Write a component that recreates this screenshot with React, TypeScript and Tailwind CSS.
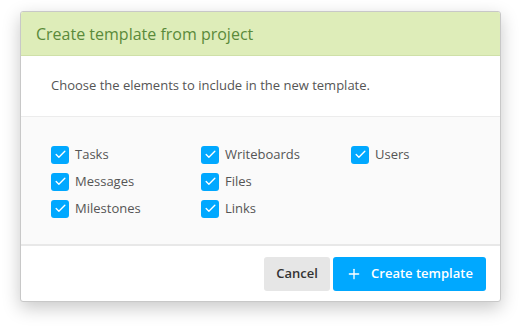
import { Check, Plus } from 'lucide-react';

const columns = [
  ['Tasks', 'Messages', 'Milestones'],
  ['Writeboards', 'Files', 'Links'],
  ['Users'],
];

function CheckItem({ label }: { label: string }) {
  return (
    <label className="flex items-center gap-[6px] h-[27px] text-[13px] text-[#555]">
      <span className="w-[18px] h-[18px] rounded-[3px] bg-[#00a8ff] flex items-center justify-center">
        <Check className="w-[13px] h-[13px] text-white" strokeWidth={2.5} />
      </span>
      {label}
    </label>
  );
}

export default function App() {
  return (
    <div className="w-[522px] h-[332px] bg-white pt-[11px] pl-[20px]" style={{ fontFamily: '"Open Sans", sans-serif' }}>
      <div className="w-[481px] rounded-[3px] border border-[#c8c8c8] bg-white overflow-hidden shadow-[0_6px_18px_rgba(0,0,0,0.22)]">
        {/* header */}
        <div className="h-[44px] bg-[#deedb9] border-b border-[#cfe0a8] flex items-center px-[15px]">
          <h2 className="text-[16px] text-[#5a8a3a]">Create template from project</h2>
        </div>

        <div className="h-[61px] flex items-center px-[30px] border-b border-[#ececec] text-[13px] text-[#555]">
          Choose the elements to include in the new template.
        </div>

        {/* elements */}
        <div className="bg-[#fafafa] h-[129px] pt-[24px] px-[30px] border-b-2 border-[#e8e8e8] flex">
          {columns.map((col, i) => (
            <div key={i} className="w-[150px] shrink-0 flex flex-col">
              {col.map((l) => (
                <CheckItem key={l} label={l} />
              ))}
            </div>
          ))}
        </div>

        {/* footer */}
        <div className="h-[55px] flex items-center justify-end gap-[3px] pr-[14px]">
          <button className="h-[34px] w-[66px] rounded-[3px] bg-[#e6e6e6] text-[13px] font-semibold text-[#333]">
            Cancel
          </button>
          <button className="h-[34px] w-[153px] rounded-[3px] bg-[#00a8ff] text-[13px] font-semibold text-white flex items-center justify-center gap-[9px]">
            <Plus className="w-[16px] h-[16px]" strokeWidth={2} />
            Create template
          </button>
        </div>
      </div>
    </div>
  );
}
